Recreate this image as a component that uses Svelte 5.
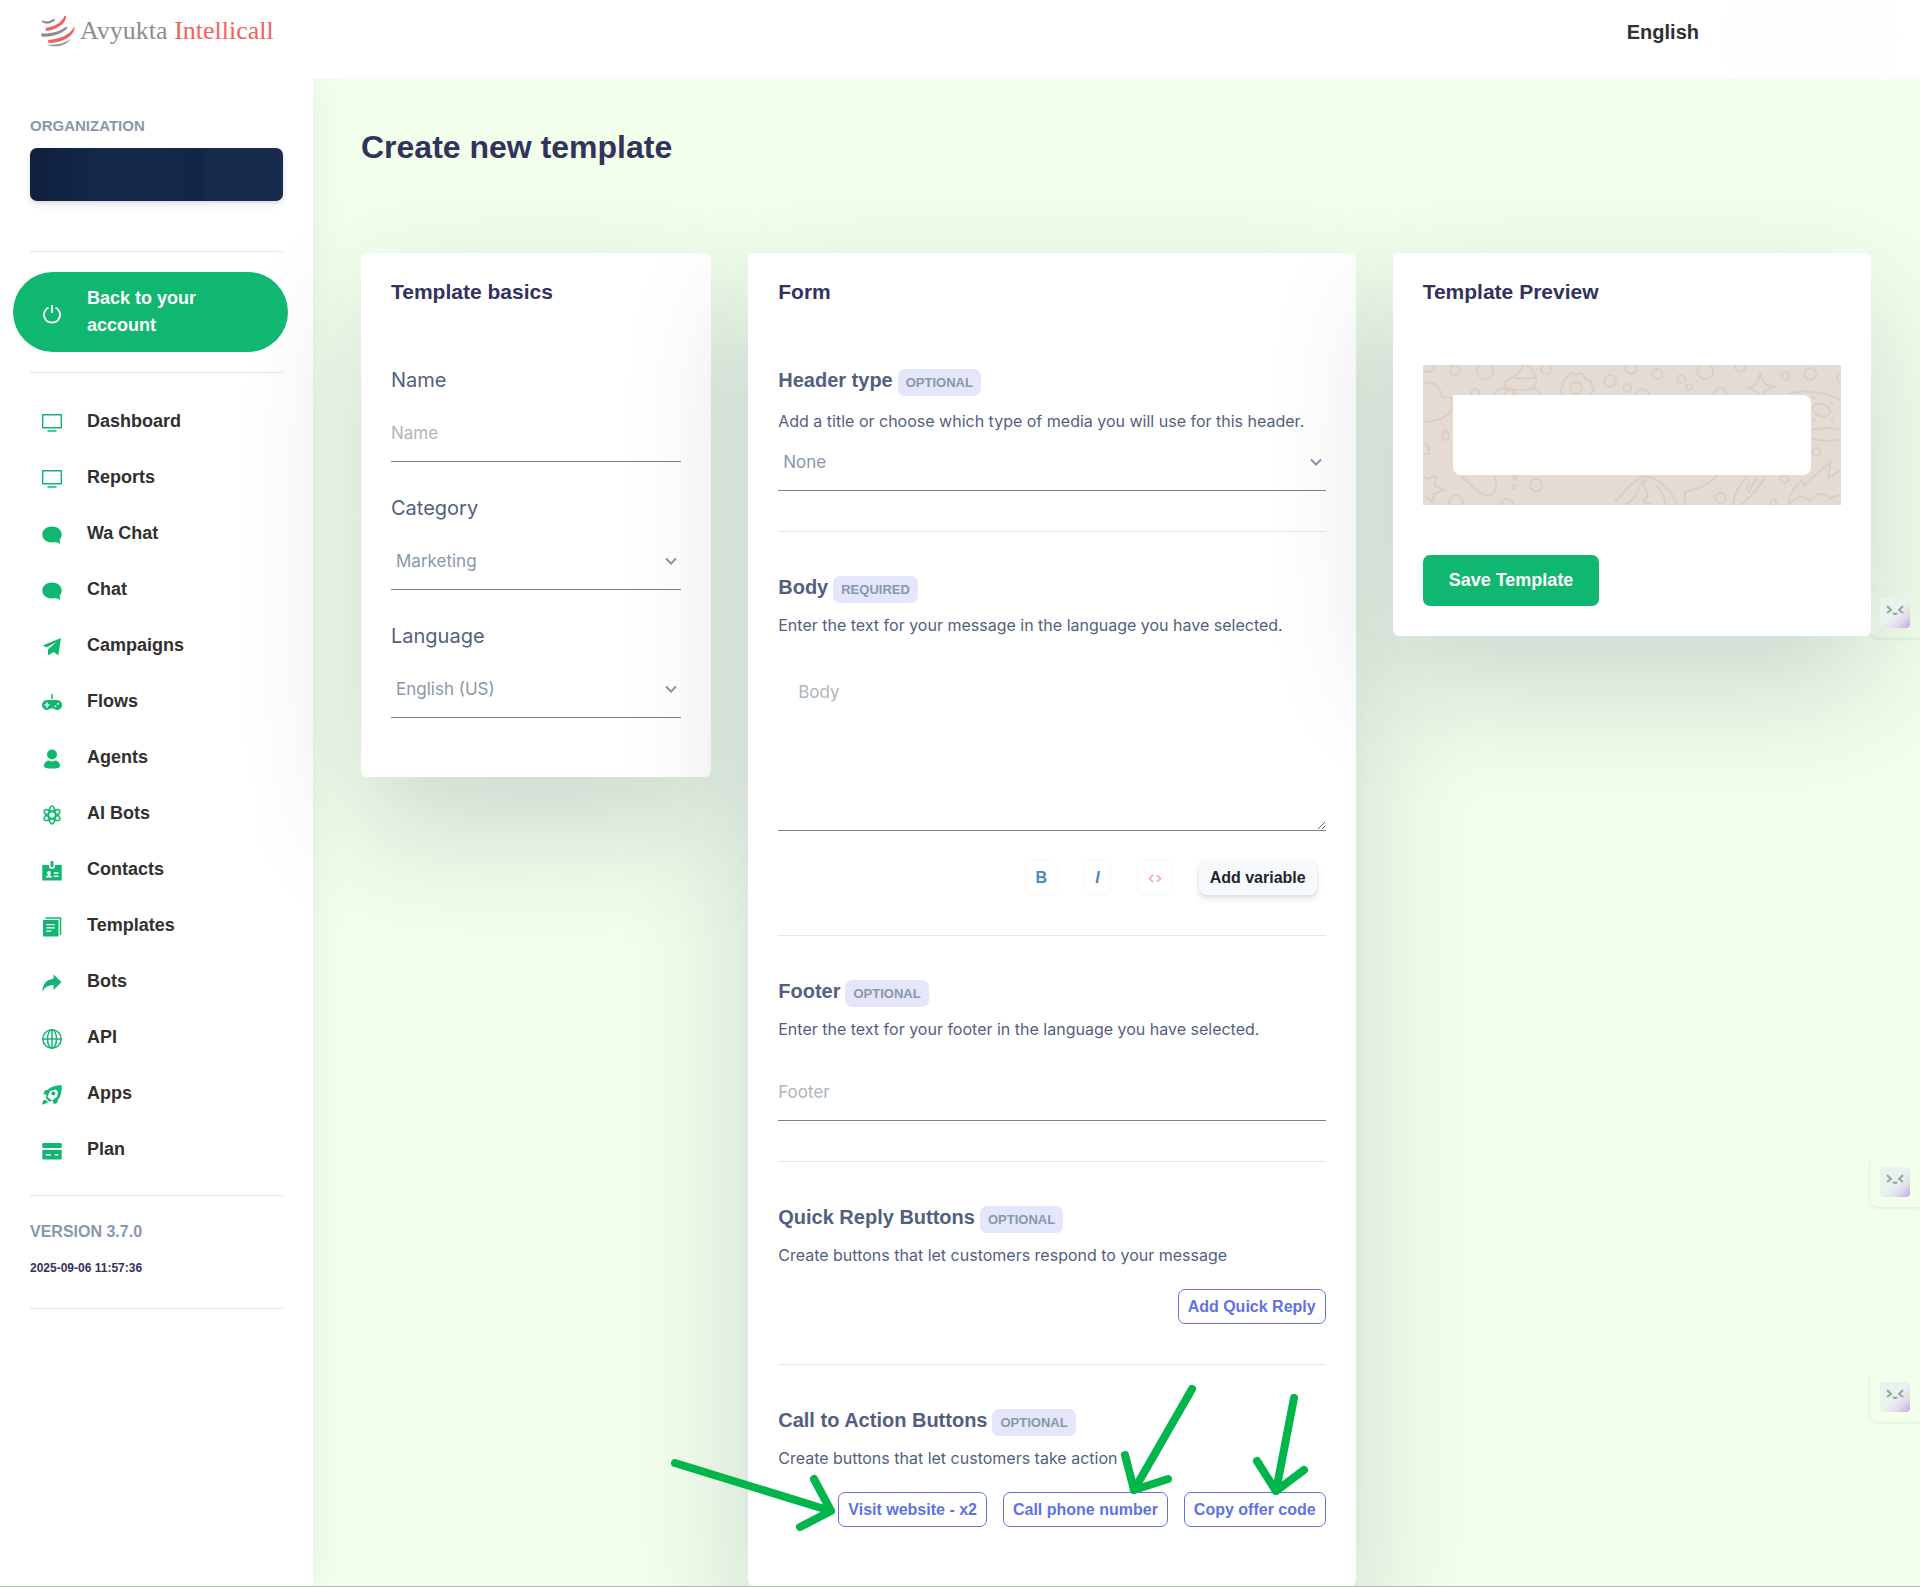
<script>
  const menu = [
    { label: "Dashboard", icon: "screen" },
    { label: "Reports", icon: "screen" },
    { label: "Wa Chat", icon: "chat" },
    { label: "Chat", icon: "chat" },
    { label: "Campaigns", icon: "send" },
    { label: "Flows", icon: "controller" },
    { label: "Agents", icon: "user" },
    { label: "AI Bots", icon: "atom" },
    { label: "Contacts", icon: "badge" },
    { label: "Templates", icon: "docs" },
    { label: "Bots", icon: "share" },
    { label: "API", icon: "globe" },
    { label: "Apps", icon: "rocket" },
    { label: "Plan", icon: "card" },
  ];

  // top offsets of the floating assistant tabs
  const helpers = [588, 1157, 1372];

  let template = {
    name: "",
    category: "Marketing",
    language: "English (US)",
    headerType: "None",
    body: "",
    footer: "",
  };
</script>

{#snippet chevron()}
  <svg class="chevron" viewBox="0 0 12 12" aria-hidden="true">
    <path d="M1 3.500 6 8.500l5-5" />
  </svg>
{/snippet}

<div class="page">
  <header class="topbar">
    <a class="logo" href="#home">
      <svg viewBox="0 0 36 32" aria-hidden="true">
        <g>
          <path fill="#8d8d8d" d="M2 5c3 2 7 2 12-1.500l1 1.500C11 9 6 9.500 2.500 7.500z" />
          <path fill="#f0625f" d="M5.500 13c9-1.500 16-5 19-12l1.500 0c.5 7-8 13.500-20 15z" />
          <path fill="#8d8d8d" d="M1 18.500c10 .5 19-2 25.500-7l1 1.500C22 19 12 22.500 1.500 21.500z" />
          <path fill="#f0625f" d="M8 25c12-1 22-5 26-13l.8.5C34 21 23 28 8.500 28z" />
          <path fill="#8d8d8d" d="M6.500 29.500c9 1 17-.5 24.500-5.500C26 30.500 15 33.500 6.500 29.500z" />
        </g>
      </svg>
      <span class="brand">Avyukta <em>Intellicall</em></span>
    </a>
    <a class="locale" href="#language">English</a>
    <span class="profile"></span>
  </header>

  <div class="layout">
    <nav class="sidebar">
      <h6 class="caption">ORGANIZATION</h6>
      <button class="org" type="button" aria-label="Organization"></button>
      <hr />
      <a class="back" href="#account">
        <svg viewBox="0 0 20 20" aria-hidden="true">
          <path class="line" d="M6.500 3.500a8 8 0 1 0 7 0M10 1v8" />
        </svg>
        <span>Back to your account</span>
      </a>
      <hr />
      <ul>
        {#each menu as item}
          <li>
            <a href="#{item.label}">
              <svg viewBox="0 0 20 20" aria-hidden="true">
                {#if item.icon === "screen"}
                  <path class="line thin" d="M.7 1.700h18.600v13H.7z" />
                  <path class="line thin" d="M5.500 18h9" />
                {:else if item.icon === "chat"}
                  <path d="M10 1.500c5.500 0 9.700 3.400 9.700 7.900 0 2.200-.8 4-2 5.300l.4 4.100-4.200-1.700c-1.200.3-2.500.4-3.900.4-5.500 0-9.700-3.400-9.700-8S4.500 1.500 10 1.500z" />
                {:else if item.icon === "send"}
                  <path d="M19 1 16.300 18.200 11.500 15 6.200 18.500 5.800 12.500 14.500 5 4.300 10.600 1 8.300z" />
                {:else if item.icon === "controller"}
                  <path class="line thin" d="M10 1v5" />
                  <path fill-rule="evenodd" d="M5 7h10a5 5 0 1 1-3.400 8.600H8.400A5 5 0 1 1 5 7zM4.200 9.500v1.700H2.500v1.600h1.700v1.700h1.600v-1.700h1.700v-1.600H5.800V9.500zm9.300 2.700a1 1 0 1 0 0 2 1 1 0 0 0 0-2zm2.500-2.400a1 1 0 1 0 0 2 1 1 0 0 0 0-2z" />
                {:else if item.icon === "user"}
                  <circle cx="10" cy="5.500" r="5" />
                  <path d="M2 17c0-3.500 2.500-5.500 5-5.500 1.900 1.200 4.100 1.200 6 0 2.500 0 5 2 5 5.500 0 2-3 2.500-8 2.500S2 19 2 17z" />
                {:else if item.icon === "atom"}
                  <g class="line thin">
                    <ellipse cx="10" cy="10" rx="3.400" ry="9" />
                    <ellipse cx="10" cy="10" rx="3.400" ry="9" transform="rotate(60 10 10)" />
                    <ellipse cx="10" cy="10" rx="3.400" ry="9" transform="rotate(-60 10 10)" />
                  </g>
                {:else if item.icon === "badge"}
                  <rect x="8.500" y="0" width="3" height="6" rx="1.300" />
                  <path fill-rule="evenodd" d="M.3 4H7v2c0 1.300 1.300 2 3 2s3-.7 3-2V4h6.700v15.500H.3zM7 10a1.900 1.900 0 0 0-1 3.500l-.2 1C4.500 14.800 3.700 15.500 3.700 16.500h6.500c0-1-.7-1.700-2-2l-.2-1A1.900 1.900 0 0 0 7 10zm4.800 1.200v1.500h4.700v-1.500zm0 3.400v1.500h4.700v-1.500z" />
                {:else if item.icon === "docs"}
                  <path class="line thin" d="M3.500 1h15v17" />
                  <path fill-rule="evenodd" d="M1 3h15.500v16.500H1zm3.200 4v1.300h8.600V7zm0 3.200v1.300h8.600v-1.300zm0 3.200v1.300h5.300v-1.300z" />
                {:else if item.icon === "share"}
                  <path d="M11.500 1.500 19.500 9l-8 8v-5C6.500 12 2.500 14 .5 19 .5 11 4.500 6.300 11.500 5.800z" />
                {:else if item.icon === "globe"}
                  <g class="line thin">
                    <circle cx="10" cy="10" r="9.200" />
                    <ellipse cx="10" cy="10" rx="4.500" ry="9.200" />
                    <path d="M10 .8v18.400M.8 10h18.400" />
                  </g>
                {:else if item.icon === "rocket"}
                  <path fill-rule="evenodd" d="M19.800.3C13 .3 8.500 2 5.800 5L3 5.300 1.500 9l3 .8-.7 3.200 3.500 3.500 3.500-.8 1 3.500 3.500-1.500.7-3C18.500 12 19.800 7.500 19.800.3zM14 4.500 16 7l-1 5-5 3.500L5.500 12 8 6zM11.300 6.600a2 2 0 1 1 0 4 2 2 0 0 1 0-4z" />
                  <path d="M3.500 14.500 6 17l-2 1.300-3.700 1.500.4-3.800z" />
                {:else}
                  <path d="M1.500 2h17q1.200 0 1.200 1.200V7H.3V3.200Q.3 2 1.500 2z" />
                  <path fill-rule="evenodd" d="M.3 9h19.400v8.300q0 1.200-1.200 1.200h-17Q.3 18.500.3 17.300zm3.500 4v1.500h5V13zm9 0v1.500h3.500V13z" />
                {/if}
              </svg>
              <span>{item.label}</span>
            </a>
          </li>
        {/each}
      </ul>
      <hr />
      <h6 class="caption version">VERSION 3.7.0</h6>
      <p class="build">2025-09-06 11:57:36</p>
      <hr />
    </nav>

    <main>
      <h1>Create new template</h1>

      <div class="cards">
        <section class="card">
          <h2>Template basics</h2>
          <div class="field">
            <label for="name">Name</label>
            <input id="name" type="text" placeholder="Name" bind:value={template.name} />
          </div>
          <div class="field">
            <label for="category">Category</label>
            <div class="select">
              <select id="category" bind:value={template.category}>
                <option>Marketing</option>
                <option>Utility</option>
              </select>
              {@render chevron()}
            </div>
          </div>
          <div class="field">
            <label for="language">Language</label>
            <div class="select">
              <select id="language" bind:value={template.language}>
                <option>English (US)</option>
                <option>English (UK)</option>
              </select>
              {@render chevron()}
            </div>
          </div>
        </section>

        <section class="card form">
          <h2>Form</h2>

          <div class="group first">
            <h3><label for="headerType">Header type</label> <span class="tag">OPTIONAL</span></h3>
            <p>Add a title or choose which type of media you will use for this header.</p>
            <div class="select">
              <select id="headerType" bind:value={template.headerType}>
                <option>None</option>
                <option>Text</option>
                <option>Image</option>
              </select>
              {@render chevron()}
            </div>
          </div>

          <div class="group">
            <h3><label for="body">Body</label> <span class="tag">REQUIRED</span></h3>
            <p>Enter the text for your message in the language you have selected.</p>
            <textarea id="body" placeholder="Body" bind:value={template.body}></textarea>
            <div class="toolbar">
              <button class="tool" type="button">B</button>
              <button class="tool italic" type="button">I</button>
              <button class="tool code" type="button" aria-label="Code">
                <svg viewBox="0 0 14 10" aria-hidden="true">
                  <path d="M5 2 1.500 5.500 5 9M9 2 12.500 5.500 9 9" />
                </svg>
              </button>
              <button class="variable" type="button">Add variable</button>
            </div>
          </div>

          <div class="group">
            <h3><label for="footer">Footer</label> <span class="tag">OPTIONAL</span></h3>
            <p>Enter the text for your footer in the language you have selected.</p>
            <input id="footer" class="spaced" type="text" placeholder="Footer" bind:value={template.footer} />
          </div>

          <div class="group">
            <h3>Quick Reply Buttons <span class="tag">OPTIONAL</span></h3>
            <p>Create buttons that let customers respond to your message</p>
            <div class="actions">
              <button class="outline" type="button">Add Quick Reply</button>
            </div>
          </div>

          <div class="group last">
            <h3>Call to Action Buttons <span class="tag">OPTIONAL</span></h3>
            <p>Create buttons that let customers take action</p>
            <div class="actions">
              <button class="outline" type="button">Visit website - x2</button>
              <button class="outline" type="button">Call phone number</button>
              <button class="outline" type="button">Copy offer code</button>
              <svg class="arrows" viewBox="0 0 660 150" aria-hidden="true">
                <path d="M9 81 165 129M148 97l17 32-31 16" />
                <path d="M526 7 468 108M459 73l9 35 34-11" />
                <path d="M628 16 610 109M591 79l19 30 28-21" />
              </svg>
            </div>
          </div>
        </section>

        <section class="card preview">
          <h2>Template Preview</h2>
          <div class="wallpaper">
            <svg viewBox="0 0 418 140" preserveAspectRatio="xMidYMid slice" aria-hidden="true">
              <circle cx="4" cy="0" r="7" />
              <circle cx="32" cy="5" r="5" />
              <circle cx="62" cy="6" r="8" />
              <circle cx="123" cy="4" r="5" />
              <circle cx="208" cy="3" r="6" />
              <circle cx="234" cy="9" r="5" />
              <circle cx="258" cy="14" r="4" />
              <circle cx="266" cy="22" r="3" />
              <circle cx="282" cy="6" r="8" />
              <circle cx="317" cy="2" r="5" />
              <circle cx="362" cy="11" r="4" />
              <circle cx="387" cy="9" r="6" />
              <circle cx="419" cy="13" r="5" />
              <circle cx="187" cy="16" r="6" />
              <circle cx="204" cy="23" r="4" />
              <circle cx="219" cy="31" r="7" />
              <circle cx="297" cy="29" r="6" />
              <circle cx="52" cy="28" r="4" />
              <path d="M90 12c6-3 8-7 11-13 6 2 10 8 11 13M90 12c4 2 18 2 22 0M90 12c-6 2-9 6-8 10M112 12c3 4 1 8-3 11-8 3-20 3-27-1M109 23c6 1 8 4 8 8M71 31c2-7 9-9 13-6 6-2 9 2 9 6" />
              <circle cx="86" cy="29" r="4" />
              <circle cx="153" cy="23" r="6" />
              <path d="M139 30c0-3-2-4-2-6 3-1 3-4 2-7 3-1 4-2 5-5 2-2 4-4 6-4 1 2 4 2 6 0 3 1 5 2 6 5 1 2 3 3 6 3 0 3 0 6 2 7 0 3-1 5-2 7" />
              <path d="M337 8c2 10 5 13 15 14-10 2-13 5-15 13-2-8-5-11-14-12 9-2 12-5 14-15z" />
              <path d="M0 18c13-2 17 4 19 14 8-1 12 3 12 7-3 12-15 18-31 18" />
              <path d="M22 65c5 4 6 10 1 10s-4-6-1-10zM2 78c5 5 6 12 0 11-3 0-4-2-4-4" />
              <path d="M365 29c15-5 40-2 55 8M388 66c4-5 10 0 13-3 4-2 8 4 14 0M385 72c8 4 23 5 35 2" />
              <ellipse cx="398" cy="45" rx="9" ry="6" transform="rotate(20 398 45)" />
              <path d="m388 31 4 3M406 37l4 3M389 53l3 3M407 56l3-3" />
              <circle cx="393" cy="87" r="4" />
              <path d="M-2 108 4 114l9-3-1 10 9 4-10 4-2 8-7-6" />
              <path d="M38 111c8 6 17 19 26 19 10 0 11-12 7-19" />
              <circle cx="92" cy="112" r="2" />
              <circle cx="91" cy="122" r="2" />
              <circle cx="33" cy="137" r="7" />
              <circle cx="84" cy="140" r="6" />
              <circle cx="113" cy="120" r="6" />
              <path d="M191 137c11-10 18-21 27-25 16-3 32 15 37 30M202 139c10-2 11-13 18-24M224 114c-10 9 4 9 0 18-6 4-5 7 4 6M232 120c8 7 10 14 10 21" />
              <path d="M294 111c-10 8-12 11-32 16l-1 15M310 140c0-10 5-18 14-29M342 112c-10 15-16 22-25 28M327 116l-4 9M333 113l-8 15M340 116l-9 12" />
              <circle cx="297" cy="133" r="5" />
              <circle cx="361" cy="114" r="4" />
              <circle cx="350" cy="138" r="3" />
              <path d="M366 140c-2-12 8-20 13-25l2 5 26-23-2 16 13-8M366 140c8-10 15-10 20-4 8-9 16-9 21-2 5-4 10-4 13-2" />
            </svg>
            <div class="bubble"></div>
          </div>
          <button class="save" type="button">Save Template</button>
        </section>
      </div>
    </main>
  </div>

  {#each helpers as top}
    <button class="helper" type="button" aria-label="Open assistant" style="top: {top}px">
      <svg viewBox="0 0 30 30" aria-hidden="true">
        <path d="m7 8 4 4-4 3M23 8l-4 4 4 3M13 15q2 2 4 0" />
      </svg>
    </button>
  {/each}
</div>

<style>
  :global(body) {
    margin: 0;
  }

  .page {
    position: relative;
    overflow: hidden;
    background: #f2ffeb;
    border-bottom: 1px solid #b4b8b2;
    font-family: "Liberation Sans", Arial, sans-serif;
    color: #525f7f;
  }

  .page * {
    box-sizing: border-box;
  }

  h1,
  h2,
  h3,
  h6,
  p,
  ul {
    margin: 0;
    padding: 0;
  }

  a {
    text-decoration: none;
  }

  button,
  input,
  select,
  textarea {
    font: inherit;
  }

  /* top bar */
  .topbar {
    position: relative;
    z-index: 2;
    display: flex;
    align-items: flex-start;
    justify-content: space-between;
    height: 79px;
    padding: 15px 221px 0 40px;
    background: #fff;
  }

  .logo {
    display: flex;
    align-items: center;
    gap: 4px;
  }

  .logo svg {
    width: 36px;
    height: 32px;
  }

  .brand {
    font-family: "Liberation Serif", "Times New Roman", serif;
    font-size: 26px;
    line-height: 32px;
    color: #8d8d8d;
  }

  .brand em {
    font-style: normal;
    color: #f0625f;
  }

  .locale {
    font-size: 20px;
    font-weight: bold;
    line-height: 34px;
    color: #32302f;
  }

  .profile {
    position: absolute;
    top: -42px;
    right: 22px;
    width: 176px;
    height: 156px;
    border-radius: 50%;
    background: rgba(130, 110, 160, 0.008);
  }

  .layout {
    display: flex;
  }

  /* sidebar */
  .sidebar {
    flex: 0 0 313px;
    padding: 33px 30px 0;
    background: #fff;
    box-shadow: 0 0 32px rgba(136, 152, 170, 0.15);
  }

  .caption {
    font-size: 15px;
    line-height: 28px;
    color: #8898aa;
  }

  .org {
    display: block;
    width: 100%;
    height: 53px;
    margin: 8px 0 50px;
    border: 0;
    border-radius: 7px;
    background: linear-gradient(90deg, #10203f, #152a4b 35%, #12264a 68%, #172b4d 72%);
    box-shadow: 0 4px 6px rgba(50, 50, 93, 0.11), 0 1px 3px rgba(0, 0, 0, 0.08);
  }

  hr {
    height: 1px;
    margin: 0;
    border: 0;
    background: #e3e5e7;
  }

  .back {
    position: relative;
    z-index: 1;
    display: flex;
    align-items: center;
    gap: 25px;
    margin: 20px -5px 20px -17px;
    padding: 13px 60px 13px 29px;
    border-radius: 40px;
    background: #10b770;
    color: #fff;
    font-size: 18px;
    font-weight: bold;
    line-height: 27px;
  }

  .sidebar svg {
    flex: none;
    width: 20px;
    height: 20px;
    margin-top: 4px;
    fill: currentColor;
  }

  .line {
    fill: none;
    stroke: currentColor;
    stroke-width: 1.7;
  }

  .thin {
    stroke-width: 1.5;
  }

  ul {
    list-style: none;
    margin: 20px 0 18px;
  }

  li a {
    display: flex;
    align-items: center;
    gap: 25px;
    height: 56px;
    padding-left: 12px;
    color: #10b770;
    font-size: 18px;
    font-weight: bold;
  }

  li span {
    color: #32302f;
  }

  .version {
    margin-top: 22px;
    font-size: 16px;
  }

  .build {
    margin: 8px 0 26px;
    font-size: 12px;
    font-weight: bold;
    line-height: 28px;
    color: #32325d;
  }

  /* content */
  main {
    flex: 1;
    min-width: 0;
    padding: 48px 49px 0 48px;
  }

  h1 {
    margin-bottom: 86px;
    font-size: 32px;
    line-height: 40px;
    color: #32325d;
  }

  .cards {
    display: grid;
    grid-template-columns: 350fr 607fr 478fr;
    align-items: start;
    gap: 37px;
  }

  .card {
    min-width: 0;
    padding: 24px 30px 59px;
    border-radius: 6px;
    background: #fff;
    box-shadow: 0 50px 125px rgba(50, 50, 93, 0.2);
    font-family: Inter, sans-serif;
  }

  h2 {
    margin-bottom: 59px;
    font-family: "Liberation Sans", Arial, sans-serif;
    font-size: 21px;
    line-height: 30px;
    color: #32325d;
  }

  .field + .field {
    margin-top: 32px;
  }

  .field label {
    display: block;
    margin-bottom: 10px;
    font-size: 20px;
    line-height: 28px;
  }

  input,
  select,
  textarea {
    display: block;
    width: 100%;
    margin: 0;
    border: 0;
    border-bottom: 1px solid #808080;
    border-radius: 0;
    outline: none;
    background: transparent;
    font-size: 17px;
    color: #8898aa;
  }

  input {
    height: 58px;
    padding: 0;
  }

  input::placeholder,
  textarea::placeholder {
    color: #adb5bd;
  }

  .select {
    display: grid;
    align-items: center;
  }

  select {
    grid-area: 1 / 1;
    height: 58px;
    padding: 0 30px 0 5px;
    appearance: none;
  }

  .chevron {
    grid-area: 1 / 1;
    justify-self: end;
    width: 12px;
    height: 12px;
    margin-right: 4px;
    fill: none;
    stroke: #8898aa;
    stroke-width: 2;
    pointer-events: none;
  }

  /* template form */
  .group {
    padding: 41px 0 40px;
    border-bottom: 1px solid #e5e6e8;
  }

  .group.first {
    padding-top: 0;
  }

  .group.last {
    padding-bottom: 0;
    border-bottom: 0;
  }

  h3 {
    display: flex;
    gap: 5px;
    margin-bottom: 10px;
    font-family: "Liberation Sans", Arial, sans-serif;
    font-size: 20px;
    line-height: 28px;
  }

  .first h3 {
    margin-bottom: 13px;
  }

  .tag {
    margin-top: 3px;
    padding: 0 8px;
    border-radius: 7px;
    background: #e4e7fb;
    font-size: 13px;
    line-height: 27px;
    color: #8898aa;
  }

  .group p {
    font-size: 16px;
    line-height: 24px;
  }

  textarea {
    height: 164px;
    margin-top: 30px;
    padding: 12px 20px;
    line-height: 26px;
    resize: vertical;
  }

  .spaced {
    margin-top: 22px;
  }

  .toolbar {
    display: flex;
    justify-content: flex-end;
    gap: 26px;
    margin-top: 29px;
    padding-right: 9px;
  }

  .toolbar button,
  .outline {
    height: 35px;
    padding: 0 10px;
    border: 1px solid #5e72e4;
    border-radius: 7px;
    background: #fff;
    font-family: "Liberation Sans", Arial, sans-serif;
    font-size: 16px;
    font-weight: bold;
    color: #5e72e4;
  }

  .toolbar .tool {
    border-color: #f8f8fa;
    color: #4a8ab8;
  }

  .toolbar .italic {
    font-style: italic;
  }

  .toolbar svg {
    display: block;
    width: 14px;
    height: 10px;
    fill: none;
    stroke: #f7a3b0;
    stroke-width: 1.6;
  }

  .toolbar .variable {
    border-color: #f7fafc;
    background: #f7fafc;
    box-shadow: 0 4px 6px rgba(50, 50, 93, 0.11), 0 1px 3px rgba(0, 0, 0, 0.08);
    color: #212529;
  }

  .outline {
    padding: 0 9px;
  }

  .actions {
    position: relative;
    display: flex;
    justify-content: flex-end;
    gap: 16px;
    margin-top: 22px;
  }

  .arrows {
    position: absolute;
    right: 0;
    bottom: -5px;
    width: 660px;
    height: 150px;
    fill: none;
    stroke: #00b54a;
    stroke-width: 8;
    stroke-linecap: round;
    stroke-linejoin: round;
    pointer-events: none;
  }

  /* preview */
  .preview {
    padding-bottom: 30px;
  }

  .preview h2 {
    margin-bottom: 58px;
  }

  .wallpaper {
    position: relative;
    padding: 30px;
    background: #e4dcd4;
  }

  .wallpaper svg {
    position: absolute;
    inset: 0;
    width: 100%;
    height: 100%;
    fill: none;
    stroke: #dacfc6;
    stroke-width: 2;
  }

  .bubble {
    position: relative;
    height: 80px;
    border-radius: 0 8px 8px 8px;
    background: #fff;
  }

  .save {
    height: 51px;
    margin-top: 50px;
    padding: 0 26px;
    border: 0;
    border-radius: 7px;
    background: #10b770;
    font-family: "Liberation Sans", Arial, sans-serif;
    font-size: 18px;
    font-weight: bold;
    color: #fff;
  }

  .helper {
    position: absolute;
    right: 0;
    width: 50px;
    height: 50px;
    padding: 10px;
    border: 0;
    border-radius: 8px 0 0 8px;
    background: transparent;
    box-shadow: 0 1px 3px rgba(90, 120, 90, 0.16);
  }

  .helper svg {
    display: block;
    width: 30px;
    height: 30px;
    border-radius: 4px;
    background: linear-gradient(135deg, #e8f3ee 50%, #e2dcea 75%, #c4a4e2);
    fill: none;
    stroke: #99a3a0;
    stroke-width: 2;
  }
</style>
